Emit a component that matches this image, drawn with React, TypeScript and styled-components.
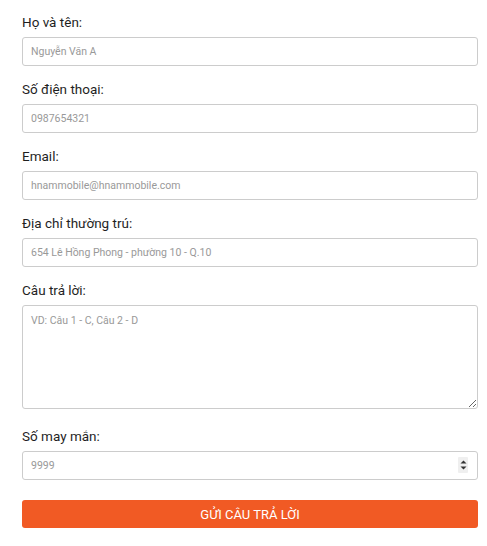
import styled, { createGlobalStyle } from 'styled-components';

const GlobalStyle = createGlobalStyle`
  html, body {
    margin: 0;
    background: #fff;
    font-family: Roboto, 'Liberation Sans', Arial, sans-serif;
  }
`;

type Field = {
  id: string;
  label: string;
  placeholder: string;
  kind?: 'text' | 'number' | 'area';
};

const fields: Field[] = [
  { id: 'name', label: 'Họ và tên:', placeholder: 'Nguyễn Văn A' },
  { id: 'phone', label: 'Số điện thoại:', placeholder: '0987654321' },
  { id: 'email', label: 'Email:', placeholder: 'hnammobile@hnammobile.com' },
  { id: 'address', label: 'Địa chỉ thường trú:', placeholder: '654 Lê Hồng Phong - phường 10 - Q.10' },
  { id: 'answer', label: 'Câu trả lời:', placeholder: 'VD: Câu 1 - C, Câu 2 - D', kind: 'area' },
  { id: 'lucky', label: 'Số may mắn:', placeholder: '9999', kind: 'number' },
];

function Spinner() {
  return (
    <Spin aria-hidden="true">
      <svg width="9" height="14" viewBox="0 0 9 14">
        <path d="M4.5 2.5 L7.5 5.5 L1.5 5.5 Z" fill="#333" />
        <path d="M4.5 11.5 L7.5 8.5 L1.5 8.5 Z" fill="#333" />
      </svg>
    </Spin>
  );
}

export default function App() {
  return (
    <>
      <GlobalStyle />
      <Form onSubmit={(e) => e.preventDefault()}>
        {fields.map((f) => (
          <Group key={f.id} $area={f.kind === 'area'}>
            <Label htmlFor={f.id}>{f.label}</Label>
            {f.kind === 'area' && <Area id={f.id} placeholder={f.placeholder} />}
            {f.kind === 'number' && (
              <NumberWrap>
                <Input id={f.id} type="number" placeholder={f.placeholder} />
                <Spinner />
              </NumberWrap>
            )}
            {!f.kind && <Input id={f.id} type="text" placeholder={f.placeholder} />}
          </Group>
        ))}
        <Submit type="submit">GỬI CÂU TRẢ LỜI</Submit>
      </Form>
    </>
  );
}

const Form = styled.form`
  display: flex;
  flex-direction: column;
  width: 456px;
  padding: 12px 0 0 22px;
`;

const Group = styled.div<{ $area?: boolean }>`
  display: flex;
  flex-direction: column;
  margin-bottom: ${(p) => (p.$area ? '17px' : '13px')};
`;

const Label = styled.label`
  font-size: 13.5px;
  font-weight: 400;
  line-height: 20px;
  color: #1f1f1f;
  margin-bottom: 5px;
`;

const fieldBase = `
  box-sizing: border-box;
  width: 100%;
  border: 1px solid #ccc;
  border-radius: 3px;
  background: #fff;
  font-family: Roboto, 'Liberation Sans', Arial, sans-serif;
  font-size: 10.5px;
  color: #555;
  padding: 0 8px;
  outline: none;

  &::placeholder {
    color: #999;
  }
`;

const Input = styled.input`
  ${fieldBase}
  display: block;
  height: 29px;
  -moz-appearance: textfield;

  &::-webkit-inner-spin-button,
  &::-webkit-outer-spin-button {
    -webkit-appearance: none;
    margin: 0;
  }
`;

const NumberWrap = styled.div`
  position: relative;
`;

const Spin = styled.span`
  position: absolute;
  right: 10px;
  top: 6px;
  width: 10px;
  height: 16px;
  display: flex;
  align-items: center;
  justify-content: center;
  background: #efefef;
  border-radius: 1px;
`;

const Area = styled.textarea`
  ${fieldBase}
  display: block;
  height: 104px;
  padding-top: 8px;
  resize: vertical;
`;

const Submit = styled.button`
  margin-top: 7px;
  height: 28px;
  border: none;
  border-radius: 3px;
  background: #f15a24;
  color: #fff;
  font-family: Roboto, 'Liberation Sans', Arial, sans-serif;
  font-size: 13px;
  cursor: pointer;
`;
